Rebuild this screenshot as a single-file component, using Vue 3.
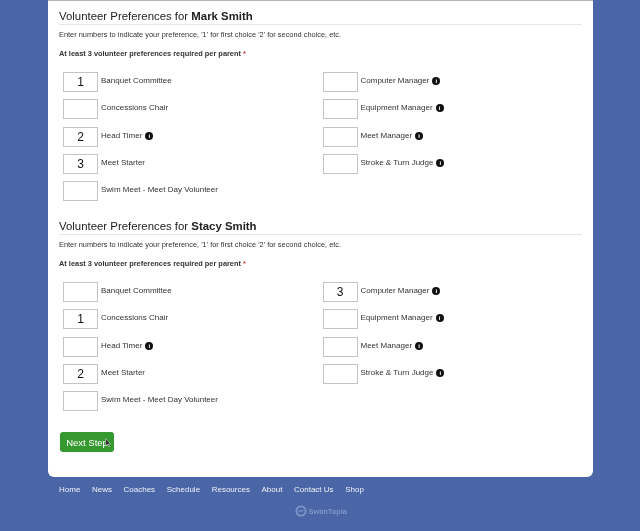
<script setup>
const sections = [
  {
    name: 'Mark Smith',
    left: [
      { label: 'Banquet Committee', value: '1' },
      { label: 'Concessions Chair', value: '' },
      { label: 'Head Timer', value: '2', info: true },
      { label: 'Meet Starter', value: '3' },
      { label: 'Swim Meet - Meet Day Volunteer', value: '' },
    ],
    right: [
      { label: 'Computer Manager', value: '', info: true },
      { label: 'Equipment Manager', value: '', info: true },
      { label: 'Meet Manager', value: '', info: true },
      { label: 'Stroke & Turn Judge', value: '', info: true },
    ],
  },
  {
    name: 'Stacy Smith',
    left: [
      { label: 'Banquet Committee', value: '' },
      { label: 'Concessions Chair', value: '1' },
      { label: 'Head Timer', value: '', info: true },
      { label: 'Meet Starter', value: '2' },
      { label: 'Swim Meet - Meet Day Volunteer', value: '' },
    ],
    right: [
      { label: 'Computer Manager', value: '3', info: true },
      { label: 'Equipment Manager', value: '', info: true },
      { label: 'Meet Manager', value: '', info: true },
      { label: 'Stroke & Turn Judge', value: '', info: true },
    ],
  },
]
const links = ['Home', 'News', 'Coaches', 'Schedule', 'Resources', 'About', 'Contact Us', 'Shop']
</script>

<template>
  <div class="page">
    <main class="card">
      <section v-for="s in sections" :key="s.name" class="section">
        <h2 class="title">Volunteer Preferences for <b>{{ s.name }}</b></h2>
        <p class="hint">Enter numbers to indicate your preference, '1' for first choice '2' for second choice, etc.</p>
        <p class="req">At least 3 volunteer preferences required per parent <span class="star">*</span></p>
        <div class="cols">
          <div v-for="(col, ci) in [s.left, s.right]" :key="ci" class="col">
            <div v-for="item in col" :key="item.label" class="row">
              <div class="box">{{ item.value }}</div>
              <span class="label">{{ item.label }}</span>
              <span v-if="item.info" class="info">i</span>
            </div>
          </div>
        </div>
      </section>
      <button class="next">Next Step
        <svg class="cursor" viewBox="0 0 10 14" width="7" height="10"><path d="M1 1l0 10 2.5-2 1.5 3.5 1.5-.7L4.6 8.4 8 8z" fill="#222" stroke="#fff" stroke-width=".7"/></svg>
      </button>
    </main>
    <nav class="foot">
      <a v-for="l in links" :key="l">{{ l }}</a>
    </nav>
    <div class="brand">
      <svg viewBox="0 0 16 16" width="12" height="12"><circle cx="8" cy="8" r="6.2" fill="none" stroke="#7f97c8" stroke-width="2.4"/><path d="M5 9c2-3 4 1 6-2" fill="none" stroke="#7f97c8" stroke-width="1.5"/></svg>
      <span>SwimTopia</span>
    </div>
  </div>
</template>

<style>
html, body { margin: 0; background: #4a66a6; }
</style>

<style scoped>
.page {
  width: 640px;
  height: 531px;
  overflow: hidden;
  background: #4a66a6;
  font-family: "Liberation Sans", Arial, sans-serif;
  padding: 0 0 0 48px;
  box-sizing: border-box;
  filter: blur(0.45px);
}
.card {
  width: 545px;
  height: 477px;
  box-sizing: border-box;
  background: #fff;
  border-top: 1px solid #b5b5b5;
  border-radius: 0 0 6px 6px;
  padding: 8px 11px 0 11px;
}
.section { height: 210px; }
.title {
  margin: 0;
  font-size: 11.4px;
  font-weight: 400;
  line-height: 15px;
  color: #222;
  border-bottom: 1px solid #e6e6e6;
  height: 15px;
}
.title b { font-weight: 700; }
.hint {
  margin: 5px 0 0;
  font-size: 7.4px;
  line-height: 10px;
  color: #333;
}
.req {
  margin: 9px 0 0;
  font-size: 7.4px;
  line-height: 10px;
  font-weight: 700;
  color: #333;
}
.star { color: #c33; }
.cols {
  display: flex;
  margin-top: 13px;
  padding-left: 4px;
}
.col { width: 261.5px; display: flex; flex-direction: column; gap: 7.3px; }
.row { display: flex; align-items: flex-start; height: 20px; }
.box {
  width: 35px;
  height: 20px;
  box-sizing: border-box;
  border: 1px solid #c4c4c4;
  font-size: 12px;
  font-weight: 400;
  line-height: 19px;
  text-align: center;
  color: #111;
  background: #fff;
}
.label {
  margin: 2px 0 0 3px;
  font-size: 8px;
  line-height: 13px;
  color: #333;
}
.info {
  width: 8px;
  height: 8px;
  margin: 5px 0 0 3px;
  border-radius: 50%;
  background: #111;
  color: #fff;
  font-size: 6px;
  font-weight: 700;
  line-height: 8px;
  text-align: center;
}
.next {
  position: relative;
  display: block;
  margin: 3px 0 0 1px;
  width: 54px;
  height: 20px;
  padding: 0;
  border: 0;
  border-radius: 3px;
  background: #35992f;
  color: #fff;
  font-family: inherit;
  font-size: 9.5px;
  text-align: center;
}
.cursor { position: absolute; left: 45px; top: 6px; }
.foot {
  display: flex;
  gap: 11.6px;
  margin-top: 7px;
  padding-left: 11px;
  font-size: 8px;
  line-height: 12px;
  color: #eef1f8;
}
.brand {
  display: flex;
  align-items: center;
  gap: 1.5px;
  margin: 9px 0 0 247px;
  color: #7f97c8;
  font-size: 7.4px;
  font-weight: 700;
}
</style>
